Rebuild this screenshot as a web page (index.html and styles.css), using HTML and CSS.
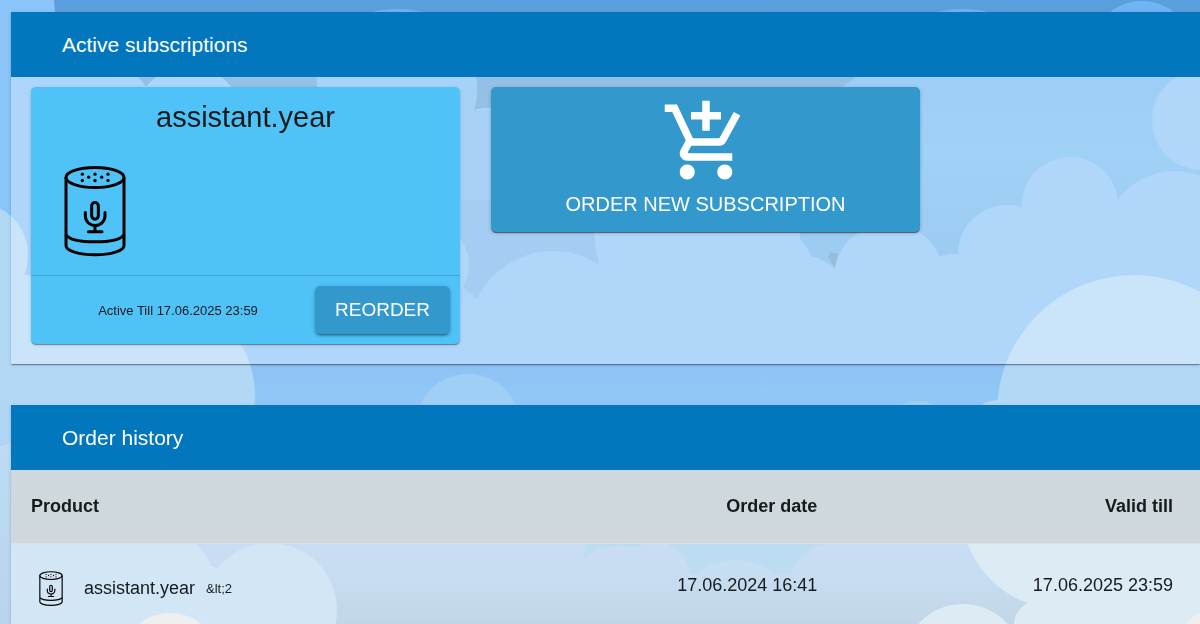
FILE: index.html
```html
<!DOCTYPE html>
<html lang="en">
<head>
<meta charset="utf-8">
<meta name="viewport" content="width=device-width, initial-scale=1">
<title>Subscriptions</title>
<link rel="stylesheet" href="styles.css">
</head>
<body>
<svg class="backdrop" viewBox="0 0 1200 624" preserveAspectRatio="xMinYMin slice" aria-hidden="true">
  <defs>
    <linearGradient id="night" x1="0" y1="0" x2="0" y2="1">
      <stop offset="0" stop-color="#5b9edd"/><stop offset="1" stop-color="#69a7dc"/>
    </linearGradient>
    <linearGradient id="day" x1="0" y1="0" x2="0" y2="1">
      <stop offset="0" stop-color="#75b8f3"/><stop offset=".4" stop-color="#78bdf4"/><stop offset="1" stop-color="#72b4ec"/>
    </linearGradient>
    <linearGradient id="low" gradientUnits="userSpaceOnUse" x1="0" y1="540" x2="0" y2="624">
      <stop offset="0" stop-color="#b1d0f0"/><stop offset=".5" stop-color="#aecdea"/><stop offset="1" stop-color="#a7c5db"/>
    </linearGradient>
    <linearGradient id="mist" gradientUnits="userSpaceOnUse" x1="0" y1="400" x2="0" y2="624">
      <stop offset="0" stop-color="#b0d5f5"/><stop offset=".2" stop-color="#bddbf4"/><stop offset="1" stop-color="#b9d4ee"/>
    </linearGradient>
    <linearGradient id="band" x1="0" y1="0" x2="0" y2="1">
      <stop offset="0" stop-color="#8fc1f5"/><stop offset=".6" stop-color="#8fc8f6"/><stop offset="1" stop-color="#92c6f7"/>
    </linearGradient>
  </defs>
  <rect width="1200" height="624" fill="#8ec6f8"/>
  <rect width="1200" height="112" fill="url(#night)"/>
  <g fill="#8ac4f8">
    <circle cx="-6" cy="-5" r="60"/>
    <path d="M0 0H54Q54 40 100 58Q135 68 146 87V300H0Z"/>
    <path d="M146 87Q160 68 190 68Q218 68 231 87V300H146Z"/>
    <path d="M231 87H317V77H476Q479 94 474 110Q484 107 500 108V300H231Z"/>
    <path d="M500 108H842V300H500Z"/>
  </g>
  <path d="M231 77H317V87H231Z" fill="#67a6dc"/>
  <path d="M317 77H476V87H317Z" fill="#82bff6"/>
  <g fill="#70b4f5">
    <ellipse cx="397" cy="24" rx="44" ry="15"/>
    <ellipse cx="963" cy="24" rx="44" ry="15"/>
    <circle cx="1142" cy="53" r="52"/>
  </g>
  <path d="M794 270V110H842V87L856 77H1200V270Z" fill="url(#day)"/>
  <path d="M460 77H476Q479 94 474 110H491V232H460Z" fill="#82bef3"/>
  <path d="M460 200H491V232H594L602 270L479 300L460 285Z" fill="#7cb8ed"/>
  <path d="M828 257L830 252L838 254L835 268Z" fill="#66a1c4"/>
  <g fill="#8ec6f8">
    <circle cx="553" cy="335" r="84"/>
    <circle cx="425" cy="265" r="44"/>
    <path d="M594 232H800V300H610Q597 270 594 232Z"/>
    <circle cx="765" cy="275" r="50"/>
    <path d="M808 256Q822 257 838 271V300H800Z"/>
    <circle cx="889" cy="278" r="55"/>
    <path d="M940 256Q950 253 962 254V300H935Z"/>
    <circle cx="1007" cy="254" r="49"/>
    <circle cx="1070" cy="205" r="48"/>
    <circle cx="1175" cy="243" r="72"/>
    <circle cx="1202" cy="120" r="50"/>
    <rect x="1007" y="215" width="193" height="90"/>
  </g>
  <rect y="364" width="1200" height="51" fill="url(#band)"/>
  <g fill="#b3d8f6">
    <circle cx="-25" cy="255" r="53"/>
    <path d="M0 275H30L90 320V420H0Z"/>
    <circle cx="155" cy="395" r="100"/>
    <circle cx="1134" cy="412" r="137"/>
  </g>
  <circle cx="468" cy="427" r="53" fill="#9fcff5"/>
  <circle cx="918" cy="440" r="39" fill="#a4cff5"/>
  <path d="M975 410Q985 400 998 400V412Z" fill="#b3d8f6"/>
  <rect y="410" width="1200" height="214" fill="url(#low)"/>
  <path d="M0 400H11V443H0Z" fill="#b0d5f5"/>
  <path d="M0 446L11 442V624H0Z" fill="url(#mist)"/>
  <path d="M587 540H870Q815 545 800 575H588Q580 565 587 540Z" fill="#a0cded"/>
  <g fill="url(#low)">
    <circle cx="620" cy="606" r="60"/>
    <circle cx="655" cy="577" r="35"/>
    <circle cx="735" cy="620" r="60"/>
    <circle cx="835" cy="590" r="47"/>
    <rect x="580" y="574" width="230" height="50"/>
  </g>
  <g fill="#c1dbf3">
    <path d="M11 540H192Q205 550 212 568V624H11Z"/>
    <circle cx="270" cy="610" r="67"/>
    <path d="M212 566L225 572V624H200V566Z"/>
  </g>
  <circle cx="170" cy="663" r="50" fill="#e8e9e9"/>
  <g fill="#cfe2f1">
    <circle cx="1062" cy="508" r="101"/>
    <path d="M1060 540H1200V624H1014Q1014 612 1027 603Z"/>
    <circle cx="963" cy="664" r="60"/>
  </g>
  <circle cx="1207" cy="636" r="24" fill="#e9e8e4"/>
</svg>

<svg class="sprite" aria-hidden="true">
  <symbol id="speaker" viewBox="194 45 186 273">
    <g fill="none" stroke="currentColor" stroke-width="9">
      <ellipse cx="287" cy="81" rx="87" ry="30"/>
      <path d="M200 81V285C200 301 239 313 287 313S374 301 374 285V81"/>
      <path d="M200 253C210 267 245 274 287 274S364 267 374 253"/>
      <rect x="277" y="156" width="20" height="50" rx="10"/>
      <path d="M258 186V196C258 213 271 225 287 225S317 213 317 196V186M287 225V244M267 244H308" stroke-linecap="round"/>
    </g>
    <g fill="currentColor">
      <circle cx="249" cy="71" r="5"/><circle cx="287" cy="71" r="5"/><circle cx="326" cy="71" r="5"/>
      <circle cx="268" cy="80" r="5"/><circle cx="307" cy="80" r="5"/>
      <circle cx="249" cy="90" r="5"/><circle cx="287" cy="90" r="5"/><circle cx="326" cy="90" r="5"/>
    </g>
  </symbol>
</svg>

<main class="page">
  <section class="panel">
    <h2 class="panel-title">Active subscriptions</h2>
    <div class="cards">
      <article class="card">
        <h3 class="card-title">assistant.year</h3>
        <div class="card-body">
          <svg class="device" aria-hidden="true"><use href="#speaker"/></svg>
        </div>
        <div class="card-actions">
          <span class="card-status">Active Till 17.06.2025 23:59</span>
          <button class="button" type="button">REORDER</button>
        </div>
      </article>
      <button class="button button-tile" type="button">
        <svg class="cart" viewBox="0 0 24 24" fill="currentColor" aria-hidden="true"><path d="M11 9h2V6h3V4h-3V1h-2v3H8v2h3v3zm-4 9c-1.100 0-1.990.9-1.990 2S5.900 22 7 22s2-.9 2-2-.9-2-2-2zm10 0c-1.100 0-1.990.9-1.990 2s.89 2 1.990 2 2-.9 2-2-.9-2-2-2zm-9.830-3.250l.03-.12.9-1.630h7.450c.75 0 1.410-.41 1.750-1.030l3.860-7.010L19.420 4h-.01l-1.100 2-2.760 5H8.530l-.13-.27L6.160 6l-.95-2-.94-2H1v2h2l3.600 7.590-1.350 2.450c-.16.28-.25.61-.25.96 0 1.100.9 2 2 2h12v-2H7.420c-.13 0-.25-.11-.25-.25z"/></svg>
        <span>ORDER NEW SUBSCRIPTION</span>
      </button>
    </div>
  </section>

  <section class="panel">
    <h2 class="panel-title">Order history</h2>
    <table class="history">
      <thead>
        <tr><th class="col-product" scope="col">Product</th><th class="col-date" scope="col">Order date</th><th class="col-valid" scope="col">Valid till</th></tr>
      </thead>
      <tbody>
        <tr>
          <td class="col-product">
            <div class="product">
              <svg class="device-small" aria-hidden="true"><use href="#speaker"/></svg>
              <span class="product-name">assistant.year</span>
              <span class="product-note">&amp;lt;2</span>
            </div>
          </td>
          <td class="col-date">17.06.2024 16:41</td>
          <td class="col-valid">17.06.2025 23:59</td>
        </tr>
      </tbody>
    </table>
  </section>
</main>
</body>
</html>
```

FILE: styles.css
```css
* {
  box-sizing: border-box;
}

body {
  margin: 0;
  color: #151a1d;
  background: #8ec6f8;
  font-family: "Liberation Sans", Arial, sans-serif;
  font-size: 18px;
}

.backdrop {
  position: fixed;
  inset: 0;
  z-index: -1;
  width: 100%;
  height: 100%;
}

.sprite {
  display: none;
}

.page {
  display: flex;
  flex-direction: column;
  gap: 41px;
  padding: 12px 0 0 11px;
}

.panel {
  background: rgba(255, 255, 255, 0.3);
  box-shadow: 0 2px 1px -1px rgba(0, 0, 0, 0.2), 0 1px 1px rgba(0, 0, 0, 0.2), 0 1px 4px rgba(0, 0, 0, 0.12);
}

.panel-title {
  margin: 0;
  padding: 0 51px;
  color: #fff;
  background: #0277bd;
  font-size: 21px;
  font-weight: 400;
  line-height: 65px;
}

.cards {
  display: grid;
  grid-template-columns: repeat(auto-fill, 429px);
  gap: 31px;
  align-items: start;
  padding: 10px 20px 20px;
}

.card {
  border-radius: 5px;
  background: #4fc3f7;
  box-shadow: 0 2px 1px -1px rgba(0, 0, 0, 0.2), 0 1px 1px rgba(0, 0, 0, 0.24), 0 1px 4px rgba(0, 0, 0, 0.12);
}

.card-title {
  margin: 0;
  padding: 10px 20px;
  font-size: 29px;
  font-weight: 400;
  line-height: 40px;
  text-align: center;
}

.card-body {
  padding: 18px 33px;
}

.device {
  display: block;
  width: 62px;
  height: 92px;
  color: #000;
}

.card-actions {
  display: flex;
  align-items: center;
  padding: 10px;
  border-top: 1px solid rgba(0, 0, 0, 0.16);
}

.card-status {
  flex: 1;
  font-size: 13px;
  text-align: center;
}

.button {
  padding: 0 20px;
  border: 0;
  border-radius: 5px;
  color: #fff;
  background: #3399cc;
  box-shadow: 0 3px 2px -2px rgba(0, 0, 0, 0.3), 0 2px 3px rgba(0, 0, 0, 0.18), 0 1px 5px rgba(0, 0, 0, 0.16);
  font: 19px/48px "Liberation Sans", Arial, sans-serif;
  cursor: pointer;
}

.button-tile {
  display: flex;
  flex-direction: column;
  align-items: center;
  padding: 10px 20px;
  box-shadow: 0 2px 1px -1px rgba(0, 0, 0, 0.3), 0 1px 1px rgba(0, 0, 0, 0.3), 0 1px 4px rgba(0, 0, 0, 0.2);
  font-size: 20px;
  line-height: 35px;
}

.cart {
  width: 90px;
  height: 90px;
}

.history {
  width: 100%;
  border-collapse: collapse;
  text-align: left;
}

.history th {
  height: 73px;
  border-bottom: 1px solid #e0e0e0;
  background: #cfd8dc;
}

.history td {
  height: 85px;
}

.history .col-product {
  padding: 0 20px;
}

.history .col-date {
  width: 30%;
  padding: 0 26px 0 20px;
  text-align: right;
}

.history .col-valid {
  width: 30%;
  padding: 0 27px 0 20px;
  text-align: right;
}

.product {
  display: flex;
  align-items: center;
  padding: 6px 8px 0;
}

.device-small {
  width: 24px;
  height: 35px;
  color: #000;
}

.product-name {
  margin: 0 11px 0 21px;
}

.product-note {
  font-size: 13px;
}
```
